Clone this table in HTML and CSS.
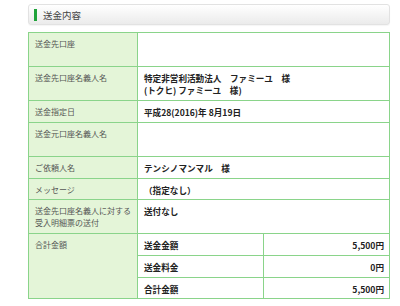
FILE: index.html
```html
<!DOCTYPE html>
<html lang="ja">
<head>
<meta charset="utf-8">
<link rel="stylesheet" href="styles.css">
</head>
<body>
<div class="page">
  <div class="section-head"><span class="bar"></span><span class="title">送金内容</span></div>
  <table class="detail">
    <colgroup><col class="c-label"><col class="c-sub"><col class="c-amt"></colgroup>
    <tr class="h34"><th>送金先口座</th><td colspan="2"></td></tr>
    <tr class="h34"><th>送金先口座名義人名</th><td colspan="2" class="val">特定非営利活動法人　ファミーユ　様<br>(トクヒ) ファミーユ　様)</td></tr>
    <tr class="h22"><th>送金指定日</th><td colspan="2" class="val">平成28(2016)年 8月19日</td></tr>
    <tr class="h34"><th>送金元口座名義人名</th><td colspan="2"></td></tr>
    <tr class="h22"><th>ご依頼人名</th><td colspan="2" class="val">テンシノマンマル　様</td></tr>
    <tr class="h21"><th>メッセージ</th><td colspan="2" class="val">（指定なし）</td></tr>
    <tr class="h34"><th>送金先口座名義人に対する<br>受入明細票の送付</th><td colspan="2" class="val">送付なし</td></tr>
    <tr class="h22"><th rowspan="3">合計金額</th><td class="val">送金金額</td><td class="val amt">5,500円</td></tr>
    <tr class="h22"><td class="val">送金料金</td><td class="val amt">0円</td></tr>
    <tr class="h21"><td class="val">合計金額</td><td class="val amt">5,500円</td></tr>
  </table>
</div>
</body>
</html>
```
FILE: styles.css
```css
html, body {
  margin: 0;
  padding: 0;
  background: #fff;
}
body {
  font-family: "Noto Sans CJK JP", "Noto Sans", sans-serif;
  color: #333;
}
.page {
  padding: 4px 0 0 28px;
  width: 362px;
}
.section-head {
  box-sizing: border-box;
  height: 21px;
  border: 1px solid #e2e2e2;
  border-radius: 3px;
  background: linear-gradient(#ffffff, #ebebeb);
  box-shadow: 0 1px 1px rgba(0, 0, 0, 0.04);
  display: flex;
  align-items: center;
  padding-left: 5px;
}
.bar {
  width: 3px;
  height: 12px;
  background: #1fa33a;
  margin-right: 6px;
}
.title {
  font-size: 9.5px;
  color: #444;
  line-height: 12px;
}
.detail {
  margin-top: 7px;
  width: 361px;
  border-collapse: collapse;
  table-layout: fixed;
}
.c-label { width: 109px; }
.c-sub { width: 126px; }
.c-amt { width: 126px; }
.detail th, .detail td {
  border: 1px solid #8ad48a;
  vertical-align: top;
  text-align: left;
  padding: 5px 0 0 6px;
  line-height: 12px;
  box-sizing: border-box;
}
.detail th {
  background: #e4f5d8;
  font-weight: normal;
  font-size: 8px;
  color: #555;
}
.detail td {
  background: #fff;
}
.val {
  font-size: 8.6px;
  font-weight: bold;
  color: #222;
}
.amt {
  text-align: right !important;
  padding-right: 5px !important;
}
.h34 { height: 34px; }
.h22 { height: 22px; }
.h21 { height: 21px; }
```
